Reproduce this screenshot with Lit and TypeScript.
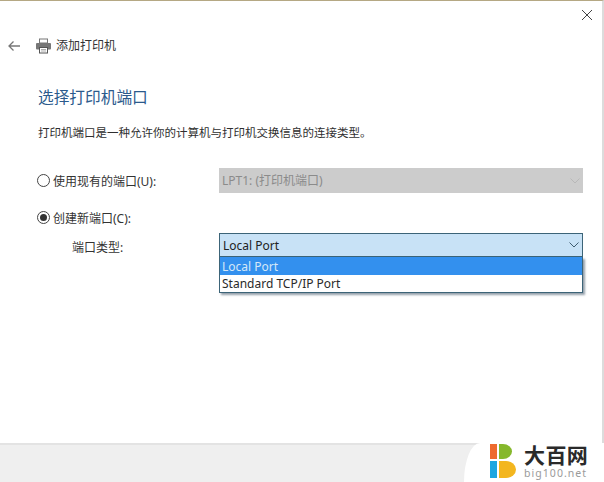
import { LitElement, html, css } from "lit";
import { customElement } from "lit/decorators.js";

const chevron = html`<svg class="chev" width="10" height="6" viewBox="0 0 10 6"><path d="M0.5 0.5 L5 5 L9.5 0.5" fill="none" stroke="currentColor" stroke-width="1"/></svg>`;

@customElement("app-root")
export class AppRoot extends LitElement {
  static styles = css`
    :host {
      display: block;
      width: 604px;
      height: 482px;
      font-family: "Noto Sans", "Noto Sans CJK SC", sans-serif;
      color: #2a2a2a;
      font-size: 12px;
    }
    .window {
      box-sizing: border-box;
      width: 604px;
      height: 482px;
      display: flex;
      flex-direction: column;
      background: #fff;
      border-top: 1px solid #b5a884;
      border-right: 2px solid #dcdcdc;
      position: relative;
    }
    .main { flex: 1; display: flex; flex-direction: column; min-height: 0; }
    .close-row { display: flex; justify-content: flex-end; padding: 8px 9px 0 0; height: 14px; }
    .head { display: flex; align-items: center; height: 20px; margin-top: 13px; padding-left: 7px; }
    .back { width: 14px; height: 12px; margin-right: 14px; }
    .printer { width: 17px; height: 16px; margin-right: 4px; }
    .head-title { font-size: 12px; line-height: 20px; color: #333; }
    .content { padding: 0 19px 0 38px; display: flex; flex-direction: column; }
    h1 { margin: 30px 0 0; font-weight: 400; font-size: 15.7px; line-height: 22px; color: #2b5a8c; }
    .desc { margin: 16px 0 0; font-size: 11.5px; line-height: 18px; color: #2f2f2f; white-space: nowrap; }
    .grid {
      margin-top: 26px;
      display: grid;
      grid-template-columns: 181px 364px;
      grid-template-rows: 25px 40px 24px;
    }
    .r1 { grid-row: 1; }
    .r2 { grid-row: 2; margin-top: 9px; }
    .r3 { grid-row: 3; padding-top: 4px; }
    .label { display: flex; align-items: center; font-size: 12px; margin-left: -1px; gap: 3px; color: #333; white-space: nowrap; }
    .sub { padding-left: 35px; }
    .radio {
      box-sizing: border-box;
      width: 13px; height: 13px;
      border: 1px solid #444;
      border-radius: 50%;
      display: flex; align-items: center; justify-content: center;
      flex: none;
      background: #fff;
    }
    .radio.on::after { content: ""; width: 7px; height: 7px; border-radius: 50%; background: #333; }
    .select {
      box-sizing: border-box;
      display: flex; align-items: center; justify-content: space-between;
      padding: 0 3px 0 3px;
      font-size: 12px;
    }
    .disabled { grid-column: 2; grid-row: 1; background: #cccccc; color: #8b8b8b; height: 25px; }
    .disabled span { margin-top: -1px; }
    .disabled .chev { color: #b8b8b8; }
    .combo { grid-column: 2; grid-row: 3; position: relative; height: 24px; }
    .active { height: 24px; background: #c8e2f6; border: 1px solid #3c6478; color: #222; }
    .active .chev { color: #3f5d70; }
    .list {
      position: absolute;
      top: 24px; left: 0; right: 0;
      box-sizing: border-box;
      background: #fff;
      border: 1px solid #3c6478;
      border-top: none;
      box-shadow: 2px 2px 2px rgba(60, 80, 100, 0.55);
      z-index: 2;
      font-size: 12px;
    }
    .opt { height: 17px; line-height: 17px; padding-left: 2px; }
    .opt.sel { height: 18px; line-height: 20px; background: #3390ee; color: #d5e8f8; }
    .footer {
      height: 39px;
      flex: none;
      background: #efefef;
      border-top: 2px solid #e3e3e3;
      box-sizing: border-box;
      display: flex;
      justify-content: flex-end;
    }
    .logo {
      width: 140px;
      margin: -2px -2px 0 0;
      background: #fff;
      border-top-left-radius: 16px 39px;
      display: flex;
      align-items: flex-start;
      padding-left: 26px;
      box-sizing: border-box;
      gap: 8px;
    }
    .logo svg { flex: none; }
    .brand { display: flex; flex-direction: column; margin-top: 2px; }
    .cn { font-size: 21px; line-height: 21px; font-weight: 700; color: #2a2a2a; letter-spacing: 0.4px; white-space: nowrap; }
    .en { font-size: 10.5px; line-height: 11px; margin-top: 2px; color: #9a9a9a; letter-spacing: 1.05px; white-space: nowrap; }
  `;

  render() {
    return html`
      <div class="window">
        <div class="main">
          <div class="close-row">
            <svg width="12" height="12" viewBox="0 0 12 12"><path d="M1 1 L11 11 M11 1 L1 11" stroke="#444" stroke-width="1" fill="none"/></svg>
          </div>
          <div class="head">
            <svg class="back" viewBox="0 0 14 12"><path d="M13 6 H2 M6.5 1.5 L2 6 L6.5 10.5" fill="none" stroke="#777" stroke-width="1.3"/></svg>
            <svg class="printer" viewBox="0 0 17 16">
              <rect x="4.5" y="1" width="8" height="4" fill="#fff" stroke="#777"/>
              <rect x="1" y="5" width="15" height="6.5" rx="1" fill="#777"/>
              <rect x="4.5" y="9.5" width="8" height="5.5" fill="#fff" stroke="#555"/>
              <path d="M6 11.5 H11 M6 13 H11" stroke="#999" stroke-width="0.8"/>
            </svg>
            <span class="head-title">添加打印机</span>
          </div>
          <div class="content">
            <h1>选择打印机端口</h1>
            <p class="desc">打印机端口是一种允许你的计算机与打印机交换信息的连接类型。</p>
            <div class="grid">
              <div class="label r1"><span class="radio"></span><span>使用现有的端口(U):</span></div>
              <div class="select disabled"><span>LPT1: (打印机端口)</span>${chevron}</div>
              <div class="label r2"><span class="radio on"></span><span>创建新端口(C):</span></div>
              <div class="label r3 sub"><span>端口类型:</span></div>
              <div class="combo">
                <div class="select active"><span>Local Port</span>${chevron}</div>
                <div class="list">
                  <div class="opt sel">Local Port</div>
                  <div class="opt">Standard TCP/IP Port</div>
                </div>
              </div>
            </div>
          </div>
        </div>
        <div class="footer">
          <div class="logo">
            <svg width="26" height="35" viewBox="0 0 26 35">
              <path d="M0 1 H7 V16 H0 Z" fill="#ee6a2f"/>
              <path d="M9 1 H13 A9 7.5 0 0 1 13 16 H9 Z" fill="#86b82c"/>
              <path d="M0 18 H7 V35 H0 Z" fill="#1ea6e0"/>
              <path d="M9 18 H16 A10 8.5 0 0 1 16 35 H9 Z" fill="#f3b61f"/>
            </svg>
            <div class="brand">
              <span class="cn">大百网</span>
              <span class="en">big100.net</span>
            </div>
          </div>
        </div>
      </div>
    `;
  }
}
